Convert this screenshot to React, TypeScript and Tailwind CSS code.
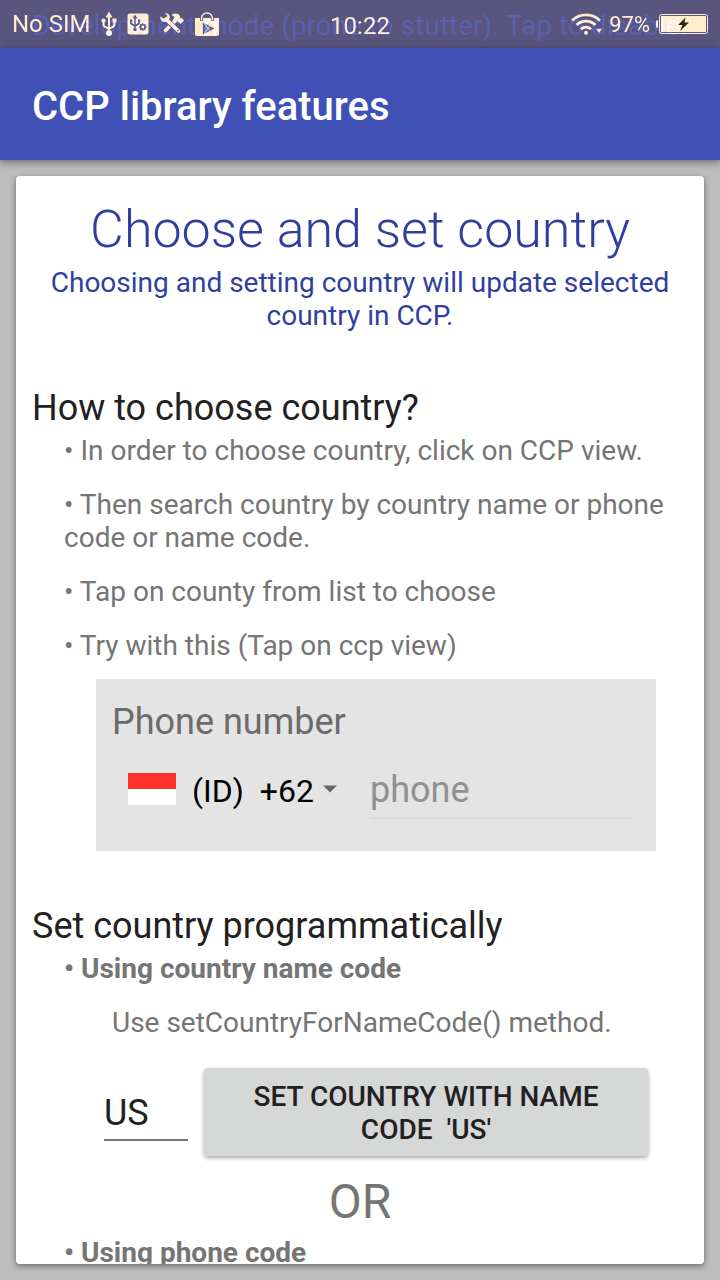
import { useState, type ReactNode } from "react";

const CREAM = "#ffedcf";
const BAR = "#59557f";

function UsbIcon({ className, color = CREAM }: { className?: string; color?: string }) {
  return (
    <svg className={className} viewBox="0 0 16 26" fill="none" stroke={color} strokeWidth="2" aria-hidden="true">
      <path d="M8 5v16M2.500 9v4.500a3 3 0 0 0 2 2.500L8 18M13.500 9v4.500a3 3 0 0 1-2 2.500L8 18" />
      <path d="M8 0.500l3.500 6h-7z" fill={color} stroke="none" />
      <circle cx="8" cy="22" r="3" fill={color} stroke="none" />
      <circle cx="2.500" cy="9.500" r="2.100" fill={color} stroke="none" />
      <path d="M11.500 7.500h4v4h-4z" fill={color} stroke="none" />
    </svg>
  );
}

function DebugIcon() {
  return (
    <svg className="h-[22px] w-[22px]" viewBox="0 0 22 22" fill="none" aria-hidden="true">
      <rect x="0.500" y="0.500" width="21" height="21" rx="2.500" fill={CREAM} />
      <g stroke={BAR} strokeWidth="1.500">
        <path d="M8 4v12M4 7v3.500l4 2.500M12 7v3.500l-4 2.500" />
        <circle cx="15.800" cy="14" r="2.200" />
        <path d="M15.800 10.300v1.400M15.800 16.300v1.400M12.100 14h1.400M18.100 14h1.400M13.200 11.400l1 1M18.400 11.400l-1 1M13.200 16.600l1-1M18.400 16.600l-1-1" />
      </g>
      <path d="M8 1.800l2.400 3.500H5.600z" fill={BAR} />
      <circle cx="8" cy="16.500" r="1.700" fill={BAR} />
      <path d="M3 6.500h2.200v2.200H3zM11 6.500h2.200v2.200H11z" fill={BAR} />
    </svg>
  );
}

function ToolsIcon() {
  return (
    <svg className="h-6 w-6" viewBox="0 0 24 24" fill="none" aria-hidden="true">
      <path d="M5.500 18.500L16 8" stroke={CREAM} strokeWidth="3.600" strokeLinecap="round" />
      <path d="M5.500 7.500L19 19" stroke={BAR} strokeWidth="5" />
      <path d="M6 7l12.500 12" stroke={CREAM} strokeWidth="3.600" strokeLinecap="round" />
      <path d="M0.300 4.500C0 8.500 3 10.500 6.500 9.800L9.500 7C10.500 3.500 8.500 1 5 1l2.300 2.500-.8 2.500-2.500.8z" fill={CREAM} />
      <path d="M11.500 3C14.500 1 18 1 20 4l.3 2.500L22 6l2 2.500-3.500 3.500L18 9.800V8.500l-2 2-3-3 1.500-2.500z" fill={CREAM} />
      <circle cx="18" cy="18.500" r="0.800" fill={BAR} />
    </svg>
  );
}

function StoreIcon() {
  return (
    <svg className="h-6 w-6" viewBox="0 0 24 24" fill="none" aria-hidden="true">
      <path d="M0 6h24v16a2 2 0 0 1-2 2H2a2 2 0 0 1-2-2z" fill={CREAM} />
      <path d="M6.500 9V6.500a5.500 5.500 0 0 1 11 0V9" stroke={BAR} strokeWidth="3" />
      <path d="M6.500 8.500V6.500a5.500 5.500 0 0 1 11 0v2" stroke={CREAM} strokeWidth="1.400" />
      <path d="M8.500 11.500l9.500 5-9.500 5z" fill="#6673aa" stroke={BAR} strokeWidth="1.200" />
      <path d="M9 11l5.500 7.500M9 22l5.500-7.500" stroke={CREAM} strokeWidth="0.800" />
    </svg>
  );
}

function WifiIcon() {
  return (
    <svg className="h-[22px] w-8" viewBox="0 0 32 22" fill="none" stroke={CREAM} strokeWidth="2.800" aria-hidden="true">
      <path d="M1 7.500a20 20 0 0 1 28 0M5.500 12a13.500 13.500 0 0 1 19 0M10 16.200a7.200 7.200 0 0 1 10 0" />
      <circle cx="15" cy="19.800" r="2" fill={CREAM} stroke="none" />
      <path d="M24.500 15.500h7l-3.500 5z" fill={CREAM} stroke={BAR} strokeWidth="0.600" />
    </svg>
  );
}

function BatteryIcon() {
  return (
    <svg className="h-5 w-[52px]" viewBox="0 0 52 20" fill="none" aria-hidden="true">
      <path d="M2 6a2 2 0 0 0-2 2v4a2 2 0 0 0 2 2z" fill={CREAM} />
      <rect x="3.500" y="0.500" width="48" height="19" rx="2" stroke={CREAM} fill={BAR} />
      <rect x="5" y="2" width="45" height="16" rx="0.500" fill={CREAM} />
      <path d="M29.500 3.500L22 11h4.500l-2.500 6 9-8.500h-4.500z" fill="#33250d" />
    </svg>
  );
}

function StatusBar() {
  return (
    <div className="relative isolate grid h-12 shrink-0 grid-cols-[1fr_auto_1fr] items-center overflow-hidden bg-[#59557f] px-3 text-2xl text-[#ffedcf]">
      <div className="flex items-center">
        <span className="whitespace-nowrap">No SIM</span>
        <UsbIcon className="ml-2.5 h-[26px] w-4" />
        <div className="ml-2.5 flex items-center gap-[11px]">
          <DebugIcon />
          <ToolsIcon />
          <StoreIcon />
        </div>
      </div>
      <span className="pt-1">10:22</span>
      <div className="flex items-center justify-end">
        <WifiIcon />
        <span className="ml-1.5 pt-0.5 text-[22px]">97%</span>
        <span className="ml-1.5">
          <BatteryIcon />
        </span>
      </div>
      <p className="absolute inset-x-0 top-[9px] text-center text-[28px] leading-[33px] whitespace-nowrap text-[#000b30] mix-blend-plus-lighter">
        Development mode (prone to stutter). Tap to disable.
      </p>
    </div>
  );
}

function Bullet({ children, bold = false }: { children: ReactNode; bold?: boolean }) {
  return <li className={bold ? "font-bold" : ""}>• {children}</li>;
}

export default function App() {
  const [code, setCode] = useState("US");
  const [phone, setPhone] = useState("");

  return (
    <div className="flex h-screen flex-col overflow-hidden bg-[#bdbdbd] font-[Roboto,sans-serif] text-[28px] leading-[33px] text-[#757575]">
      <StatusBar />
      <header className="z-10 flex h-28 shrink-0 items-center bg-[#3f51b5] px-8 pt-1.5 shadow-[0_2px_8px_rgba(0,0,0,0.45)]">
        <h1 className="text-[40px] leading-[48px] font-medium text-white">CCP library features</h1>
      </header>

      <main className="m-4 min-h-0 flex-1 overflow-hidden rounded-sm bg-white px-4 pt-6 shadow-[0_2px_6px_rgba(0,0,0,0.45)]">
        <section className="text-center text-[#303f9f]">
          <h2 className="text-[52px] leading-[60px] font-light">Choose and set country</h2>
          <p className="mt-1.5">Choosing and setting country will update selected country in CCP.</p>
        </section>

        <section className="mt-[55px]">
          <h3 className="text-4xl leading-[42px] text-[#212121]">How to choose country?</h3>
          <ul className="mt-[5px] flex flex-col gap-[21px] pr-5 pl-8">
            <Bullet>In order to choose country, click on CCP view.</Bullet>
            <Bullet>Then search country by country name or phone code or name code.</Bullet>
            <Bullet>Tap on county from list to choose</Bullet>
            <Bullet>Try with this (Tap on ccp view)</Bullet>
          </ul>

          <div className="mt-[17px] mr-8 ml-16 bg-[#e4e4e4] px-4 pt-[22px] pb-8">
            <label htmlFor="phone" className="block text-4xl leading-[42px] text-[#6b6b6b]">
              Phone number
            </label>
            <div className="mt-4 flex items-center pr-2 pl-4 text-[32px] leading-[38px]">
              <button type="button" className="flex items-center text-black" aria-label="Selected country Indonesia, +62">
                <span className="flex h-8 w-12 flex-col bg-white">
                  <span className="h-4 bg-[#ff3229]" />
                </span>
                <span className="ml-4 pt-1">(ID)</span>
                <span className="ml-4 pt-1">+62</span>
                <svg className="ml-2 h-2 w-4" viewBox="0 0 16 8" aria-hidden="true">
                  <path d="M1 0.500h14l-7 7z" fill="#666" />
                </svg>
              </button>
              <input
                id="phone"
                type="tel"
                placeholder="phone"
                value={phone}
                onChange={(e) => setPhone(e.target.value)}
                className="ml-8 h-[60px] min-w-0 flex-1 border-b-2 border-[#dcdcdc] bg-transparent pt-1 text-4xl text-black outline-none placeholder:text-[#909090]"
              />
            </div>
          </div>
        </section>

        <section className="mt-[54px]">
          <h3 className="text-4xl leading-[42px] text-[#212121]">Set country programmatically</h3>
          <ul className="mt-[5px] px-8">
            <Bullet bold>Using country name code</Bullet>
          </ul>
          <p className="mt-[21px] pl-20">Use setCountryForNameCode() method.</p>

          <div className="mt-[29px] flex items-center gap-4 pr-10 pl-[72px]">
            <input
              type="text"
              aria-label="Country name code"
              value={code}
              onChange={(e) => setCode(e.target.value)}
              className="h-[58px] w-[84px] border-b-2 border-[#757575] bg-transparent pt-1 text-4xl text-[#212121] outline-none"
            />
            <button
              type="button"
              className="h-[88px] min-w-0 flex-1 rounded-sm bg-[#d6d7d7] px-10 pt-0.5 font-medium text-[#212121] shadow-[0_2px_4px_rgba(0,0,0,0.35)]"
            >
              SET COUNTRY WITH NAME CODE &nbsp;'{code}'
            </button>
          </div>

          <p className="mt-[18px] text-center text-5xl leading-[56px]">OR</p>
          <ul className="mt-1.5 px-8">
            <Bullet bold>Using phone code</Bullet>
          </ul>
        </section>
      </main>
    </div>
  );
}
